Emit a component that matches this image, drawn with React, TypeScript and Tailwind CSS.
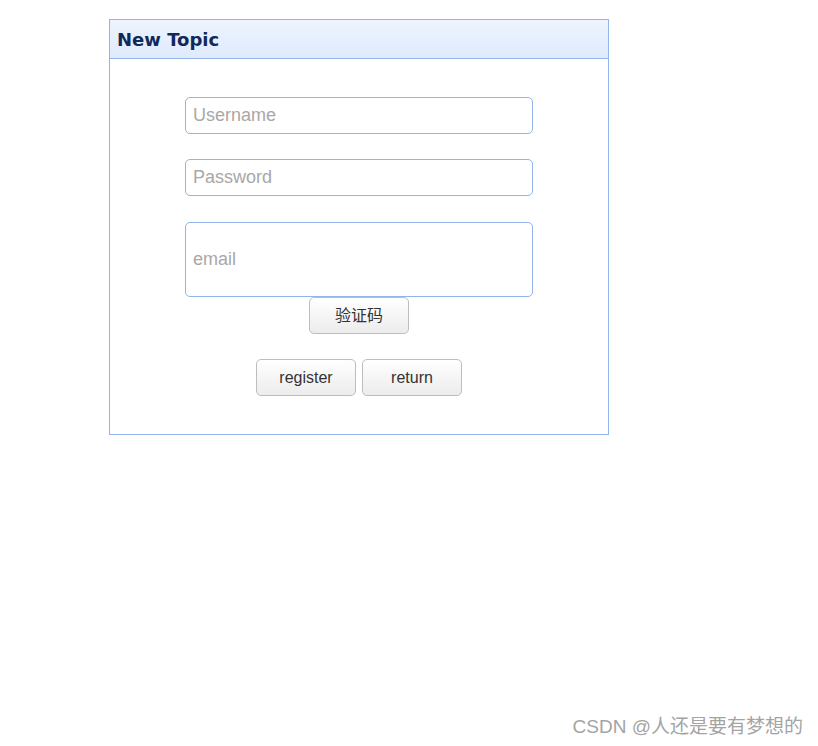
import React from "react";

const btn =
  "h-[37px] w-[100px] rounded-[5px] border border-[#bdbdbd] bg-gradient-to-b from-white to-[#ececec] text-[16px] text-[#333] [font-family:'Liberation_Sans',Arial,'Noto_Sans_CJK_SC',sans-serif]";

const field =
  "w-[348px] rounded-[5px] border border-[#92b4ea] px-[7px] text-[18px] text-[#333] outline-none placeholder:text-[#a8a8a8] [font-family:'Liberation_Sans',Arial,sans-serif]";

export default function App() {
  return (
    <div className="relative h-[746px] w-[818px] bg-white">
      <div className="ml-[109px] pt-[19px]">
        <div className="w-[500px] border border-[#92b4ea]">
          <div className="flex h-[39px] items-center border-b border-[#92b4ea] bg-gradient-to-b from-[#edf4fe] to-[#dfeafd] pl-[7px] pt-[1px]">
            <span className="text-[18px] font-bold text-[#10295a] [font-family:'DejaVu_Sans',Verdana,sans-serif]">
              New Topic
            </span>
          </div>
          <div className="flex flex-col items-center pt-[38px] pb-[38px]">
            <input className={`${field} h-[37px]`} placeholder="Username" />
            <input className={`${field} mt-[25px] h-[37px]`} placeholder="Password" />
            <input className={`${field} mt-[26px] h-[75px]`} placeholder="email" />
            <button className={btn}>验证码</button>
            <div className="mt-[25px] flex gap-[6px]">
              <button className={btn}>register</button>
              <button className={btn}>return</button>
            </div>
          </div>
        </div>
      </div>
      <div className="absolute right-[15px] top-[713px] text-[19px] text-[#a4a4a4] [font-family:'Liberation_Sans',Arial,'Noto_Sans_CJK_SC',sans-serif]">
        CSDN @人还是要有梦想的
      </div>
    </div>
  );
}
